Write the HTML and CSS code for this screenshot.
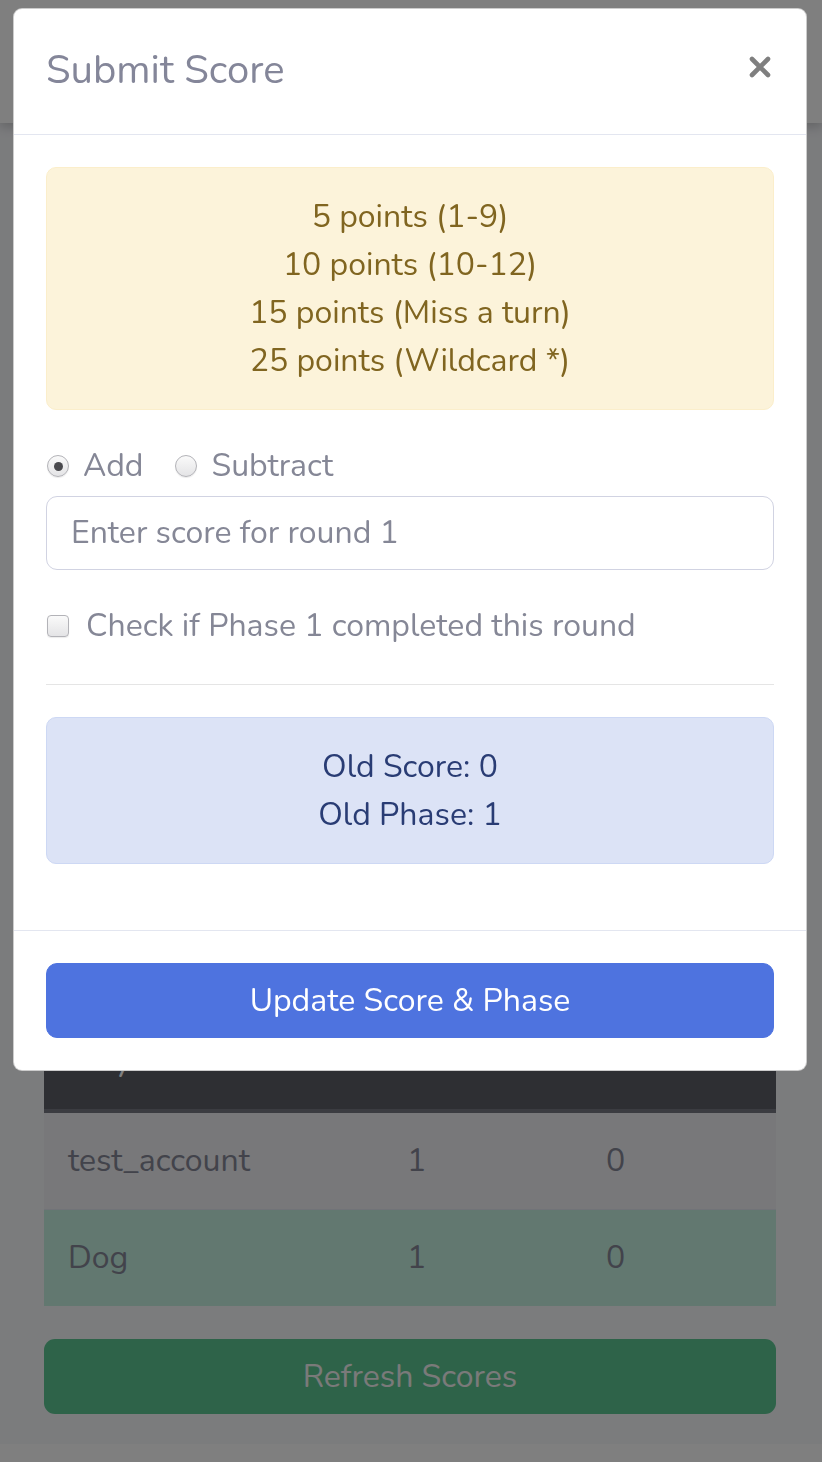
FILE: index.html
```html
<!DOCTYPE html>
<html lang="en">
<head>
<meta charset="utf-8">
<title>Submit Score</title>
<link rel="stylesheet" href="styles.css">
</head>
<body>
<div class="page">
  <header class="topbar"></header>
  <main class="content">
    <table class="scores">
      <thead>
        <tr><th class="c1">Player</th><th class="c2">Phase</th><th class="c3">Score</th></tr>
      </thead>
      <tbody>
        <tr class="row-odd"><td>test_account</td><td>1</td><td>0</td></tr>
        <tr class="row-success"><td>Dog</td><td>1</td><td>0</td></tr>
      </tbody>
    </table>
    <button class="btn btn-refresh" type="button">Refresh Scores</button>
  </main>
  <footer class="page-footer"></footer>
</div>

<div class="backdrop"></div>

<div class="modal" role="dialog" aria-labelledby="modal-title">
  <div class="modal-content">
    <div class="modal-header">
      <h5 class="modal-title" id="modal-title">Submit Score</h5>
      <button class="close" type="button" aria-label="Close">
        <svg width="22" height="22" viewBox="0 0 22 22" aria-hidden="true">
          <path d="M3 3 L19 19 M19 3 L3 19" stroke="#7f7f7f" stroke-width="4.6" stroke-linecap="round"/>
        </svg>
      </button>
    </div>
    <div class="modal-body">
      <div class="alert alert-warning">
        <div>5 points (1-9)</div>
        <div>10 points (10-12)</div>
        <div>15 points (Miss a turn)</div>
        <div>25 points (Wildcard *)</div>
      </div>
      <div class="radio-row">
        <label class="choice"><span class="radio checked"></span><span>Add</span></label>
        <label class="choice"><span class="radio"></span><span>Subtract</span></label>
      </div>
      <div class="form-control placeholder">Enter score for round 1</div>
      <label class="check-row"><span class="checkbox"></span><span>Check if Phase 1 completed this round</span></label>
      <hr class="divider">
      <div class="alert alert-primary">
        <div>Old Score: 0</div>
        <div>Old Phase: 1</div>
      </div>
    </div>
    <div class="modal-footer">
      <button class="btn btn-primary" type="button">Update Score &amp; Phase</button>
    </div>
  </div>
</div>
</body>
</html>
```
FILE: styles.css
```css
* { box-sizing: border-box; }

html, body {
  margin: 0;
  padding: 0;
}

body {
  width: 822px;
  height: 1462px;
  overflow: hidden;
  background: #ffffff;
  font-family: "Nunito", "Lato", "Noto Sans", sans-serif;
  font-size: 32px;
  line-height: 48px;
  color: #858796;
}

/* ---------- background page ---------- */
.page {
  display: flex;
  flex-direction: column;
  height: 1462px;
  background: #f7f8fb;
}

.topbar {
  height: 123px;
  background: #ffffff;
  box-shadow: 0 4px 10px rgba(58, 59, 69, 0.25);
}

.content {
  padding: 890px 46px 30px 44px;
  display: flex;
  flex-direction: column;
}

.scores {
  width: 732px;
  border-collapse: collapse;
  color: #858796;
}

.scores th,
.scores td {
  padding: 24px 24px;
  text-align: left;
  font-weight: 400;
  line-height: 48px;
}

.scores .c1 { width: 339px; }
.scores .c2 { width: 199px; }

.scores thead th {
  background: #5c5e67;
  color: #ffffff;
  border-bottom: 4px solid #767882;
}

.scores tbody td { border-top: 1px solid #e3e6f0; }

.row-odd td { background: #f0f0f4; }

.row-success td {
  background: #c4f0e0;
  border-top: 2px solid #8ae0c2;
}

.btn {
  display: block;
  width: 100%;
  height: 75px;
  border: 1px solid transparent;
  border-radius: 11px;
  font-family: inherit;
  font-size: 32px;
  line-height: 48px;
  text-align: center;
  cursor: pointer;
}

.btn-refresh {
  margin-top: 33px;
  background: #5cc692;
  color: #f4f4f4;
}

.page-footer {
  flex: 1;
  background: #ffffff;
}

/* ---------- backdrop ---------- */
.backdrop {
  position: fixed;
  inset: 0;
  background: rgba(0, 0, 0, 0.5);
}

/* ---------- modal ---------- */
.modal {
  position: fixed;
  top: 8px;
  left: 13px;
  width: 794px;
}

.modal-content {
  background: #ffffff;
  border: 1px solid rgba(0, 0, 0, 0.2);
  border-radius: 9px;
  overflow: hidden;
}

.modal-header {
  display: flex;
  align-items: center;
  justify-content: space-between;
  padding: 37px 35px 40px 32px;
  border-bottom: 1px solid #e3e6f0;
}

.modal-title {
  margin: 0;
  font-size: 40px;
  font-weight: 400;
  line-height: 48px;
  color: #848699;
}

.close {
  display: flex;
  padding: 0;
  margin: -6px 0 0 0;
  border: 0;
  background: transparent;
  cursor: pointer;
}

.modal-body {
  padding: 32px 32px 34px;
}

.alert {
  border: 1px solid transparent;
  border-radius: 10px;
  padding: 25px 40px 24px;
  text-align: center;
  margin-bottom: 32px;
}

.alert-warning {
  background: #fcf3da;
  border-color: #fbeecb;
  color: #806520;
}

.alert-primary {
  background: #dce3f6;
  border-color: #cdd8f4;
  color: #293c74;
}

.radio-row {
  display: flex;
  gap: 31px;
  height: 48px;
}

.choice,
.check-row {
  display: flex;
  align-items: center;
  gap: 14px;
  cursor: pointer;
}

.radio {
  width: 22px;
  height: 22px;
  margin-left: 1px;
  border-radius: 50%;
  border: 1px solid #b3b3b8;
  background: linear-gradient(#fafafa, #e4e4e6);
  box-shadow: 0 1px 1px rgba(0, 0, 0, 0.08);
  display: flex;
  align-items: center;
  justify-content: center;
}

.radio.checked::after {
  content: "";
  width: 9px;
  height: 9px;
  border-radius: 50%;
  background: #4a4a4e;
}

.form-control {
  margin-top: 6px;
  height: 74px;
  padding: 12px 24px;
  border: 1px solid #d1d3e2;
  border-radius: 11px;
  background: #ffffff;
}

.placeholder { color: #858796; }

.check-row {
  margin-top: 32px;
  height: 48px;
  gap: 17px;
}

.checkbox {
  width: 22px;
  height: 22px;
  margin-left: 1px;
  border-radius: 4px;
  border: 1px solid #b3b3b8;
  background: linear-gradient(#fafafa, #e4e4e6);
  box-shadow: 0 1px 1px rgba(0, 0, 0, 0.08);
}

.divider {
  margin: 34px 0 32px;
  border: 0;
  border-top: 1px solid rgba(0, 0, 0, 0.1);
}

.modal-footer {
  padding: 32px;
  border-top: 1px solid #e3e6f0;
}

.btn-primary {
  background: #4e73df;
  border-color: #4e73df;
  color: #ffffff;
}
```
